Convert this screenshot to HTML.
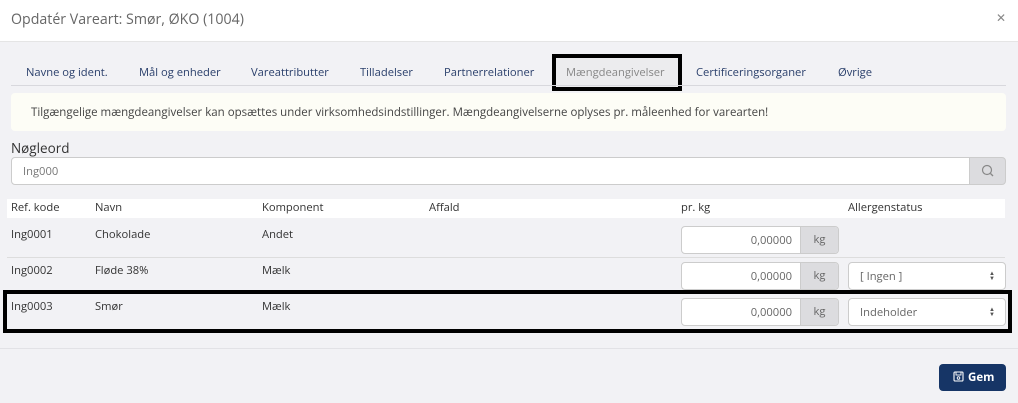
<!DOCTYPE html>
<html><head><meta charset="utf-8"><style>
*{box-sizing:border-box;margin:0;padding:0}
body{width:1018px;height:403px;background:#f2f2f5;font-family:"Open Sans","Liberation Sans",sans-serif;color:#333;position:relative;overflow:hidden;font-size:11.5px}
.abs{position:absolute}
.head{left:0;top:0;width:1018px;height:42px;background:#fff;border-bottom:1px solid #e5e5e5}
.title{left:11px;top:10px;font-size:14.2px;color:#666}
.x{left:996px;top:9px;font-size:12px;color:#888}
.tabbar{left:11px;top:85px;width:995px;height:1px;background:#d8d8dd}
.tab{top:65px;font-size:11.2px;color:#2a3f6b}
.sel{left:552px;top:54px;width:130px;height:37px;border:4px solid #000;background:#ececee}
.alert{left:11px;top:93px;width:995px;height:38px;background:#fdfdf6;border-radius:4px;padding:12px 0 0 20px;font-size:11.5px;color:#444}
.lbl{left:11px;top:139px;font-size:13.5px;color:#333}
.inp{left:11px;top:157px;width:959px;height:28px;background:#fff;border:1px solid #ccc;border-radius:4px 0 0 4px;padding:6px 0 0 11px;color:#777;font-size:11.2px}
.btn{left:969px;top:157px;width:37px;height:28px;background:#dcdcdf;border:1px solid #ccc;border-radius:0 4px 4px 0}
.th{left:7px;top:199px;width:998px;height:19px;background:#fff}
.t{font-size:11.2px;color:#333}
.line{left:7px;width:998px;height:1px;background:#ddd}
.num{width:158px;height:28px;border:1px solid #ccc;border-radius:4px;background:#fff;font-size:11.2px}
.num span{position:absolute;right:46px;top:6px;color:#666}
.num i{position:absolute;right:0;top:0;width:38px;height:26px;background:#dcdcdf;border-left:1px solid #ccc;border-radius:0 3px 3px 0;font-style:normal;text-align:center;line-height:26px;color:#666}
.sel2{left:848px;width:158px;height:28px;border:1px solid #ccc;border-radius:4px;background:#fff;padding:6px 0 0 11px;color:#666;font-size:11.2px}
.sel2 b{position:absolute;right:10px;top:8px;font-size:6px;color:#555;line-height:5px;font-weight:normal}
.box{left:3px;top:290px;width:1009px;height:43px;border:4px solid #000}
.gem{left:939px;top:364px;width:67px;height:27px;background:#163566;border-radius:4px;color:#fff;font-weight:bold;font-size:11.5px;padding:6px 0 0 14px}
</style></head><body>
<div class="abs head"></div>
<div class="abs title">Opdatér Vareart: Smør, ØKO (1004)</div>
<div class="abs x">✕</div>
<div class="abs sel"></div>
<div class="abs tabbar"></div>
<div class="abs tab" style="left:26px">Navne og ident.</div>
<div class="abs tab" style="left:139px">Mål og enheder</div>
<div class="abs tab" style="left:251px">Vareattributter</div>
<div class="abs tab" style="left:360px">Tilladelser</div>
<div class="abs tab" style="left:444px">Partnerrelationer</div>
<div class="abs tab" style="left:566px;color:#888">Mængdeangivelser</div>
<div class="abs tab" style="left:696px">Certificeringsorganer</div>
<div class="abs tab" style="left:838px">Øvrige</div>
<div class="abs alert">Tilgængelige mængdeangivelser kan opsættes under virksomhedsindstillinger. Mængdeangivelserne oplyses pr. måleenhed for varearten!</div>
<div class="abs lbl">Nøgleord</div>
<div class="abs inp">Ing000</div>
<div class="abs btn"><svg width="37" height="26" viewBox="0 0 37 26"><circle cx="17" cy="12" r="4.5" fill="none" stroke="#888" stroke-width="1.2"/><path d="M20.5 15.5L23 18" stroke="#888" stroke-width="1.3"/></svg></div>
<div class="abs th"></div>
<div class="abs t" style="left:11px;top:200px">Ref. kode</div>
<div class="abs t" style="left:95px;top:200px">Navn</div>
<div class="abs t" style="left:262px;top:200px">Komponent</div>
<div class="abs t" style="left:429px;top:200px">Affald</div>
<div class="abs t" style="left:681px;top:200px">pr. kg</div>
<div class="abs t" style="left:848px;top:200px">Allergenstatus</div>

<div class="abs t" style="left:11px;top:227px">Ing0001</div>
<div class="abs t" style="left:95px;top:227px">Chokolade</div>
<div class="abs t" style="left:262px;top:227px">Andet</div>
<div class="abs num" style="left:681px;top:226px"><span>0,00000</span><i>kg</i></div>
<div class="abs line" style="top:257px"></div>

<div class="abs t" style="left:11px;top:263px">Ing0002</div>
<div class="abs t" style="left:95px;top:263px">Fløde 38%</div>
<div class="abs t" style="left:262px;top:263px">Mælk</div>
<div class="abs num" style="left:681px;top:262px"><span>0,00000</span><i>kg</i></div>
<div class="abs sel2" style="top:262px">[ Ingen ]<b>▲<br>▼</b></div>

<div class="abs t" style="left:11px;top:299px">Ing0003</div>
<div class="abs t" style="left:95px;top:299px">Smør</div>
<div class="abs t" style="left:262px;top:299px">Mælk</div>
<div class="abs num" style="left:681px;top:298px"><span>0,00000</span><i>kg</i></div>
<div class="abs sel2" style="top:298px">Indeholder<b>▲<br>▼</b></div>
<div class="abs box"></div>
<div class="abs" style="left:0;top:348px;width:1018px;height:1px;background:#e2e2e6"></div>
<div class="abs gem"><svg width="11" height="11" viewBox="0 0 11 11" style="vertical-align:-1px;margin-right:4px"><rect x="1" y="1" width="9" height="9" rx="1" fill="none" stroke="#fff" stroke-width="1.1"/><rect x="3" y="1" width="5" height="3" fill="none" stroke="#fff" stroke-width="0.9"/><circle cx="5.5" cy="7" r="1.3" fill="none" stroke="#fff" stroke-width="0.9"/></svg>Gem</div>
</body></html>
